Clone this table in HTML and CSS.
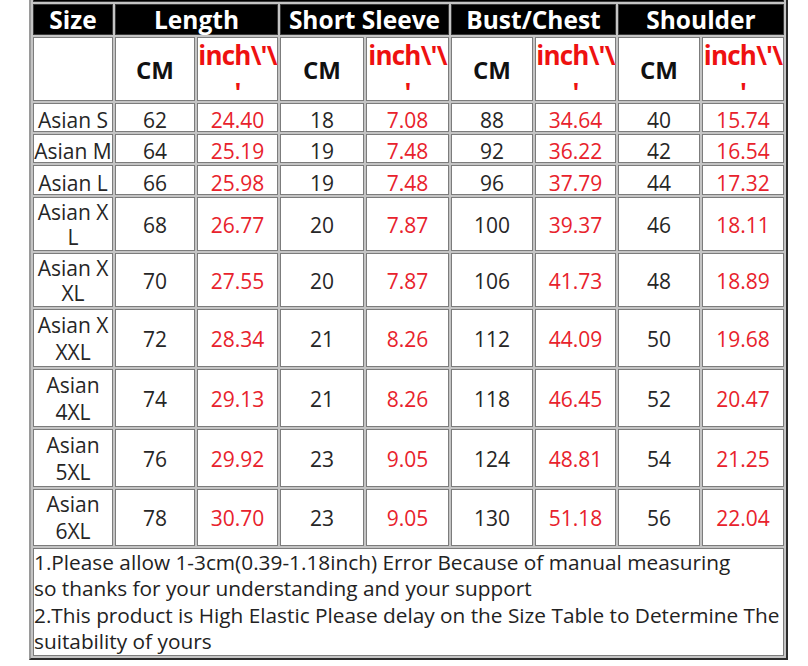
FILE: index.html
```html
<!DOCTYPE html>
<html>
<head>
<meta charset="utf-8">
<link rel="stylesheet" href="styles.css">
</head>
<body>
<table class="size-table">
  <colgroup>
    <col class="c80"><col class="c80"><col class="c81"><col class="c84"><col class="c83"><col class="c82"><col class="c81"><col class="c82"><col class="c82">
  </colgroup>
  <tr class="r-title"><td colspan="9" class="title"></td></tr>
  <tr class="r-head">
    <th>Size</th>
    <th colspan="2">Length</th>
    <th colspan="2">Short Sleeve</th>
    <th colspan="2">Bust/Chest</th>
    <th colspan="2">Shoulder</th>
  </tr>
  <tr class="r-unit">
    <td></td>
    <td class="cm">CM</td><td class="inch"><div class="inch-box">inch\'\<br>'</div></td>
    <td class="cm">CM</td><td class="inch"><div class="inch-box">inch\'\<br>'</div></td>
    <td class="cm">CM</td><td class="inch"><div class="inch-box">inch\'\<br>'</div></td>
    <td class="cm">CM</td><td class="inch"><div class="inch-box">inch\'\<br>'</div></td>
  </tr>
  <tr class="r1"><td>Asian S</td><td>62</td><td class="red">24.40</td><td>18</td><td class="red">7.08</td><td>88</td><td class="red">34.64</td><td>40</td><td class="red">15.74</td></tr>
  <tr class="r1"><td>Asian M</td><td>64</td><td class="red">25.19</td><td>19</td><td class="red">7.48</td><td>92</td><td class="red">36.22</td><td>42</td><td class="red">16.54</td></tr>
  <tr class="r1b"><td>Asian L</td><td>66</td><td class="red">25.98</td><td>19</td><td class="red">7.48</td><td>96</td><td class="red">37.79</td><td>44</td><td class="red">17.32</td></tr>
  <tr class="r2a"><td class="brk">Asian XL</td><td>68</td><td class="red">26.77</td><td>20</td><td class="red">7.87</td><td>100</td><td class="red">39.37</td><td>46</td><td class="red">18.11</td></tr>
  <tr class="r2b"><td class="brk">Asian XXL</td><td>70</td><td class="red">27.55</td><td>20</td><td class="red">7.87</td><td>106</td><td class="red">41.73</td><td>48</td><td class="red">18.89</td></tr>
  <tr class="r2"><td class="brk">Asian XXXL</td><td>72</td><td class="red">28.34</td><td>21</td><td class="red">8.26</td><td>112</td><td class="red">44.09</td><td>50</td><td class="red">19.68</td></tr>
  <tr class="r2"><td>Asian 4XL</td><td>74</td><td class="red">29.13</td><td>21</td><td class="red">8.26</td><td>118</td><td class="red">46.45</td><td>52</td><td class="red">20.47</td></tr>
  <tr class="r2"><td>Asian 5XL</td><td>76</td><td class="red">29.92</td><td>23</td><td class="red">9.05</td><td>124</td><td class="red">48.81</td><td>54</td><td class="red">21.25</td></tr>
  <tr class="r2c"><td>Asian 6XL</td><td>78</td><td class="red">30.70</td><td>23</td><td class="red">9.05</td><td>130</td><td class="red">51.18</td><td>56</td><td class="red">22.04</td></tr>
  <tr class="r-notes">
    <td colspan="9" class="notes">1.Please allow 1-3cm(0.39-1.18inch) Error Because of manual measuring<br>so thanks for your understanding and your support<br>2.This product is High Elastic Please delay on the Size Table to Determine The suitability of yours</td>
  </tr>
</table>
</body>
</html>
```

FILE: styles.css
```css
html, body {
  margin: 0;
  padding: 0;
  background: #ffffff;
}

body {
  font-family: "Open Sans", "Liberation Sans", sans-serif;
  overflow: hidden;
}

.size-table {
  margin: -24px 0 0 29px;
  width: 759px;
  table-layout: fixed;
  border-collapse: separate;
  border-spacing: 2px;
  background: #c4c4c4;
  border-style: solid;
  border-width: 2px;
  border-color: #9a9a9a #2c2c2c #2c2c2c #9a9a9a;
}

.c80 { width: 80px; }
.c81 { width: 81px; }
.c82 { width: 82px; }
.c83 { width: 83px; }
.c84 { width: 84px; }

.size-table td,
.size-table th {
  box-sizing: border-box;
  padding: 0;
  border: 1px solid #7c7c7c;
  background: #ffffff;
  color: #262626;
  font-size: 21px;
  line-height: 27px;
  text-align: center;
  vertical-align: middle;
}

.size-table .title {
  background: #000000;
  border-color: #3a3a3a;
  height: 22px;
}

.size-table th {
  background: #000000;
  color: #ffffff;
  border-color: #3a3a3a;
  font-weight: 700;
  font-size: 24.5px;
  line-height: 29px;
  height: 31px;
  white-space: nowrap;
}

.r-unit td { height: 64px; }
.size-table .cm {
  font-weight: 700;
  font-size: 24px;
  line-height: 29px;
  color: #111111;
  padding-top: 1px;
}
.size-table .inch {
  padding: 0;
  vertical-align: top;
}
.inch-box {
  box-sizing: border-box;
  height: 62px;
  padding-top: 9px;
  display: flex;
  align-items: center;
  justify-content: center;
  text-align: center;
  white-space: nowrap;
  font-weight: 700;
  font-size: 26px;
  letter-spacing: -0.8px;
  line-height: 37px;
  color: #ee1111;
}

.size-table .red { color: #e8222c; }
.size-table .brk { word-break: break-all; }

.r1 td, .r1b td {
  line-height: 22px;
  padding-top: 5px;
}
.r1 td { height: 29px; }
.r1b td { height: 30px; }

.r2a td, .r2b td {
  line-height: 25px;
  padding-top: 2px;
}
.r2a td { height: 54px; }
.r2b td { height: 53px; }

.r2 td {
  height: 58px;
  line-height: 27px;
  padding-top: 2px;
}
.r2c td {
  height: 57px;
  line-height: 27px;
  padding-top: 1px;
}

.size-table .notes {
  height: 108px;
  text-align: left;
  font-size: 20.8px;
  line-height: 26.4px;
  padding: 0;
  vertical-align: top;
  color: #222222;
}
```
